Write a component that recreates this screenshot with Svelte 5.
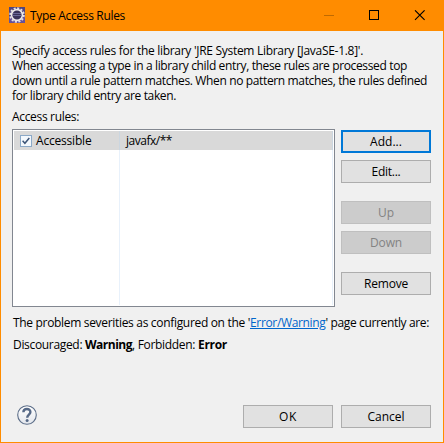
<script>
  const intro = [
    ["Specify access rules for the library 'JRE System Library [JavaSE-1.8]'.", 351],
    ['When accessing a type in a library child entry, these rules are processed top', 395],
    ['down until a rule pattern matches. When no pattern matches, the rules defined', 415],
    ['for library child entry are taken.', 164],
  ];
  const actions = [
    { label: 'Add...', width: 32, kind: 'focus' },
    { label: 'Edit...', width: 29 },
    { label: 'Up', width: 16, kind: 'disabled gap' },
    { label: 'Down', width: 32, kind: 'disabled' },
    { label: 'Remove', width: 44, kind: 'gap' },
  ];

  // Spreads the glyphs of a label over its intended width.
  function fit(node, width) {
    const natural = node.getBoundingClientRect().width;
    const spacing = (width - natural) / node.textContent.length;
    node.style.letterSpacing = `${spacing}px`;
  }
</script>

<div class="window">
  <header>
    <svg class="logo" width="16" height="16" viewBox="0 0 16 16">
      <rect width="16" height="16" fill="#51457f" />
      <rect y="10" width="16" height="6" fill="#66519a" />
      <circle cx="8" cy="8" r="6.9" fill="none" stroke="#e4e0e2" stroke-width="1.7" stroke-dasharray="2.1 1.51" />
      <circle cx="8" cy="8" r="5.4" fill="#393259" stroke="#eeeaeb" stroke-width="1.6" />
      <path d="M4 6.5h8M3.7 8.5h8.6" stroke="#6a6796" />
    </svg>
    <h1><span use:fit={95}>Type Access Rules</span></h1>
    <svg class="controls" width="102" height="11" viewBox="0 0 102 11" fill="none">
      <path d="M0 5.5h10" stroke="#c06a00" />
      <rect x="45.5" y=".5" width="9" height="9" stroke="#000" />
      <path d="M91 .3l9.6 9.6M100.6 .3L91 9.9" stroke="#000" stroke-width="1.1" />
    </svg>
  </header>

  <main>
    <div class="intro">
      {#each intro as [text, width]}
        <p><span use:fit={width}>{text}</span></p>
      {/each}
    </div>
    <p class="caption"><span use:fit={67}>Access rules:</span></p>
    <div class="rules">
      <div class="table">
        <div class="row">
          <div class="kind">
            <svg width="12" height="12" viewBox="0 0 12 12">
              <rect x=".5" y=".5" width="11" height="11" fill="#f3f8fd" stroke="#8ba9c8" />
              <path d="M2.6 5.8l2.3 2.5 4.4-5.2" fill="none" stroke="#3c5578" stroke-width="1.5" />
            </svg>
            <span use:fit={55.5}>Accessible</span>
          </div>
          <div class="pattern"><span use:fit={46}>javafx/**</span></div>
        </div>
        <div class="row empty">
          <div class="kind"></div>
          <div class="pattern"></div>
        </div>
      </div>
      <div class="actions">
        {#each actions as a}
          <button class={a.kind}><span use:fit={a.width}>{a.label}</span></button>
        {/each}
      </div>
    </div>
    <p class="note"><span use:fit={237}>The problem severities as configured on the '</span><a href="#settings" use:fit={75.5}>Error/Warning</a><span use:fit={103.5}>' page currently are:</span></p>
    <p class="note levels"><span use:fit={72}>{'Discouraged: '}</span><b use:fit={47}>Warning</b><span use:fit={66}>{', Forbidden: '}</span><b use:fit={29}>Error</b></p>
  </main>

  <footer>
    <svg class="help" width="20" height="20" viewBox="0 0 20 20">
      <defs>
        <linearGradient id="shade" x2="0" y2="1">
          <stop offset="0" stop-color="#fff" />
          <stop offset="1" stop-color="#e3e6ec" />
        </linearGradient>
      </defs>
      <circle cx="10" cy="10" r="9.3" fill="url(#shade)" stroke="#5b6d88" stroke-width="1.1" />
      <path d="M6.4 7.2C6.4 3 13.4 3 13.4 7c0 2.6-3.2 2.7-3.2 5.8" fill="none" stroke="#566987" stroke-width="2.4" />
      <circle cx="10.1" cy="15.4" r="1.5" fill="#566987" />
    </svg>
    <button><span use:fit={18}>OK</span></button>
    <button><span use:fit={37}>Cancel</span></button>
  </footer>
</div>

<style>
  .window {
    box-sizing: border-box;
    width: 444px;
    height: 443px;
    display: flex;
    flex-direction: column;
    border: 1px solid #ff8c00;
    background: #f0f0f0;
    color: #000;
    font: 12px/15px 'Open Sans', 'Noto Sans', sans-serif;
  }
  span, a, b {
    display: inline-block;
    white-space: pre;
  }
  p, h1 { margin: 0; }
  header {
    height: 30px;
    flex: none;
    display: flex;
    align-items: flex-start;
    background: #ff8c00;
  }
  .logo { margin: 6px 0 0 8px; }
  h1 {
    flex: 1;
    margin: 7px 0 0 5px;
    font: inherit;
  }
  .controls { margin: 9px 17px 0 0; }
  main { padding: 12px 12px 0 11px; }
  .caption { margin-top: 6px; }
  .rules {
    display: flex;
    gap: 6px;
    margin-top: 5px;
  }
  .table {
    box-sizing: border-box;
    width: 323px;
    height: 178px;
    display: flex;
    flex-direction: column;
    padding: 1px;
    border: 1px solid #828790;
    background: #fff;
  }
  .row {
    display: flex;
    height: 19px;
    background: #d9d9d9;
  }
  .empty { flex: 1; background: #fff; }
  .kind {
    box-sizing: border-box;
    width: 106px;
    display: flex;
    align-items: center;
    gap: 4px;
    padding-left: 6px;
    border-right: 1px solid #cbd6e0;
  }
  .pattern {
    flex: 1;
    padding: 2px 0 0 6px;
    border-right: 1px solid #cbd6e0;
  }
  .empty .kind, .empty .pattern { border-color: #e8f1fb; }
  .actions {
    display: flex;
    flex-direction: column;
    gap: 7px;
    padding-top: 1px;
  }
  button {
    box-sizing: border-box;
    width: 90px;
    height: 23px;
    padding: 0;
    border: 1px solid #adadad;
    background: #e1e1e1;
    color: #000;
    font: inherit;
  }
  .focus { border: 2px solid #0078d7; }
  .disabled {
    border-color: #bfbfbf;
    background: #ccc;
    color: #838383;
  }
  .gap { margin-top: 11px; }
  .note { padding-left: 1px; margin-top: 8px; }
  .levels { margin-top: 7px; }
  a {
    color: #0066cc;
    text-decoration: underline;
    text-underline-offset: 1px;
  }
  footer {
    display: flex;
    gap: 8px;
    margin-top: auto;
    padding: 0 12px 14px 16px;
  }
  .help { margin-right: auto; }
</style>
